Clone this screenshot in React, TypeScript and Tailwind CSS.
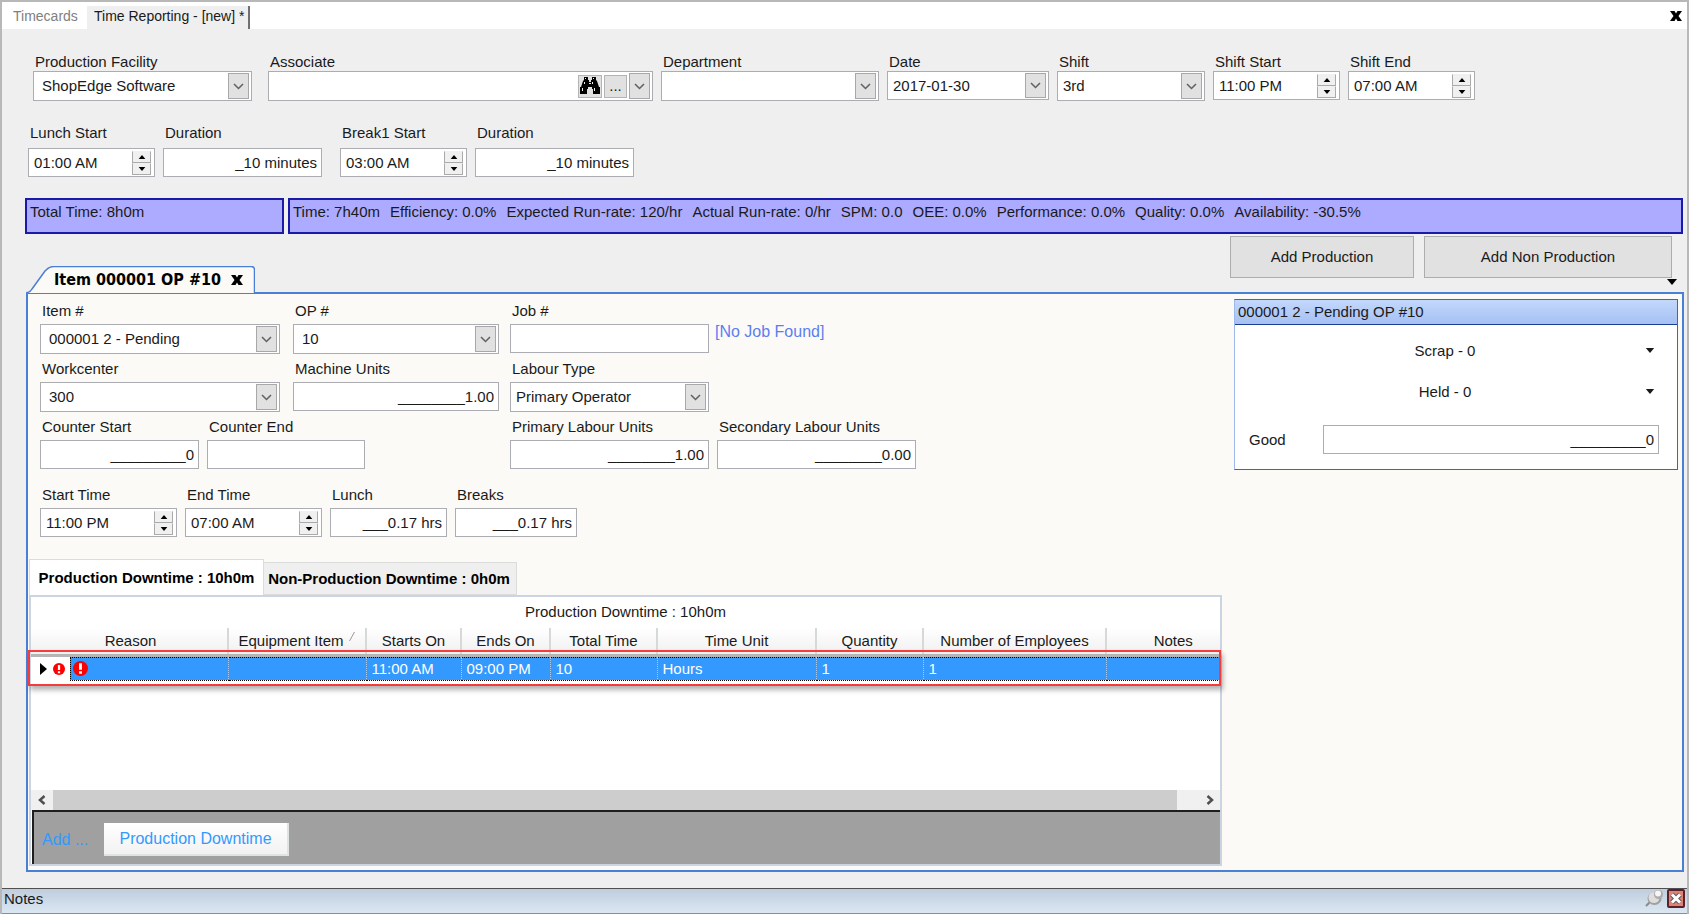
import { useId, type ReactNode } from 'react';

const BOX = 'border border-[#abadb3] bg-white';

function Chevron() {
  return (
    <svg width="11" height="7" viewBox="0 0 11 7" fill="none" stroke="#606060" strokeWidth="1.5">
      <path d="M1 1l4.5 4.5L10 1" />
    </svg>
  );
}

function Caret({ up = false, className = 'h-[6px] w-[10px]' }: { up?: boolean; className?: string }) {
  return (
    <svg viewBox="0 0 10 6" className={className}>
      <path d={up ? 'M0 6h10L5 0z' : 'M0 0h10L5 6z'} fill="currentColor" />
    </svg>
  );
}

function Field({
  label,
  id,
  className,
  gap = 'gap-0',
  children,
}: {
  label: string;
  id: string;
  className: string;
  gap?: string;
  children: ReactNode;
}) {
  return (
    <div className={`flex flex-col shrink-0 ${gap} ${className}`}>
      <label htmlFor={id} className="pl-[2px] leading-[18px] whitespace-nowrap">
        {label}
      </label>
      {children}
    </div>
  );
}

type FieldProps = { label: string; value?: string; className: string; gap?: string };

function Combo({ label, value = '', className, gap, pad = 'pl-2' }: FieldProps & { pad?: string }) {
  const id = useId();
  return (
    <Field label={label} id={id} className={className} gap={gap}>
      <div className="relative">
        <select id={id} className={`${BOX} h-[30px] w-full appearance-none pr-7 ${pad}`}>
          <option>{value}</option>
        </select>
        <span className="pointer-events-none absolute top-[2px] right-[3px] flex h-[26px] w-[21px] items-center justify-center border border-[#a8a8a8] bg-[#e1e1e1]">
          <Chevron />
        </span>
      </div>
    </Field>
  );
}

function Spinner({ label, value, className, gap }: FieldProps) {
  const id = useId();
  return (
    <Field label={label} id={id} className={className} gap={gap}>
      <div className={`${BOX} flex h-[29px] items-center pr-[3px]`}>
        <input id={id} defaultValue={value} className="min-w-0 flex-1 pl-[5px] outline-none" />
        <div className="flex flex-col text-black">
          {[true, false].map((up) => (
            <button
              key={String(up)}
              aria-label={`${label} ${up ? 'up' : 'down'}`}
              className="flex h-3 w-[19px] items-center justify-center border border-[#aaa] border-t-[#f0f0f0] bg-[#f0f0f0]"
            >
              <Caret up={up} className="h-1 w-2" />
            </button>
          ))}
        </div>
      </div>
    </Field>
  );
}

function NumberBox({ label, value, className, gap }: FieldProps) {
  const id = useId();
  return (
    <Field label={label} id={id} className={className} gap={gap}>
      <input id={id} defaultValue={value} className={`${BOX} h-[29px] w-full pr-1 text-right`} />
    </Field>
  );
}

function Binoculars() {
  return (
    <svg width="20" height="18" viewBox="0 0 20 18">
      <path
        d="M4 0h4v3h1v2h2V3h1V0h4v3l1 1 2 6h1v7h-7v-5h-1v-2H8v2H7v5H0v-7h1l2-6 1-1z"
        fill="#000"
      />
      <path
        d="M5 1h1v1H5zM13 1h1v1h-1zM4 5h1v2H4zM12 5h1v2h-1zM2 11h1v3H2zM14 11h1v3h-1zM9 6h2v1H9z"
        fill="#f0f0f0"
      />
    </svg>
  );
}

function ErrorIcon({ size }: { size: number }) {
  return (
    <svg width={size} height={size} viewBox="0 0 16 16" className="shrink-0">
      <circle cx="8" cy="8" r="8" fill="#f00" />
      <path d="M6.5 2.5h3v6.8h-3zM6.5 11h3v2.5h-3z" fill="#fff" />
    </svg>
  );
}

function CloseX() {
  return (
    <svg width="12" height="10" viewBox="0 0 12 10">
      <path d="M0 0h4.5L6 2.5 7.5 0H12L8.500 5 12 10H7.500L6 7.500 4.500 10H0l3.500-5z" fill="#000" />
    </svg>
  );
}

const STATS = [
  'Time: 7h40m',
  'Efficiency: 0.0%',
  'Expected Run-rate: 120/hr',
  'Actual Run-rate: 0/hr',
  'SPM: 0.0',
  'OEE: 0.0%',
  'Performance: 0.0%',
  'Quality: 0.0%',
  'Availability: -30.5%',
];

const COLUMNS = [
  { name: 'Equipment Item', value: '', width: 'w-[138px]', pad: 'pr-3' },
  { name: 'Starts On', value: '11:00 AM', width: 'w-[95px]', pad: '' },
  { name: 'Ends On', value: '09:00 PM', width: 'w-[89px]', pad: '' },
  { name: 'Total Time', value: '10', width: 'w-[107px]', pad: '' },
  { name: 'Time Unit', value: 'Hours', width: 'w-[159px]', pad: '' },
  { name: 'Quantity', value: '1', width: 'w-[107px]', pad: '' },
  { name: 'Number of Employees', value: '1', width: 'w-[183px]', pad: '' },
  { name: 'Notes', value: '', width: '', pad: 'pl-5' },
];

function DocumentTabs() {
  return (
    <div className="flex h-[27px] items-stretch bg-white pr-[5px] text-sm">
      <button className="w-[85px] pl-[11px] text-left text-[#808080]">Timecards</button>
      <button className="mt-1 w-[163px] border-r-2 border-[#707070] bg-[#efefef] pb-1 pl-[7px] text-left whitespace-nowrap">
        Time Reporting - [new] *
      </button>
      <button aria-label="Close" className="ml-auto">
        <CloseX />
      </button>
    </div>
  );
}

function ShiftForm() {
  const associateId = useId();
  const dateId = useId();
  return (
    <>
      <div className="flex items-start gap-2 pt-6 pl-[31px]">
        <Combo label="Production Facility" value="ShopEdge Software" className="mr-2 w-[219px]" />
        <Field label="Associate" id={associateId} className="w-[385px]">
          <div className={`${BOX} flex h-[30px] items-center gap-[2px] pr-[2px]`}>
            <input id={associateId} className="min-w-0 flex-1 pl-2 outline-none" />
            <button
              aria-label="Find associate"
              className="flex h-[23px] w-6 items-center justify-center border border-[#b4b4b4] bg-[#e1e1e1]"
            >
              <Binoculars />
            </button>
            <button className="h-[23px] w-[23px] border border-[#b4b4b4] bg-[#e1e1e1]">...</button>
            <button
              aria-label="Associate list"
              className="flex h-[26px] w-[21px] items-center justify-center border border-[#a8a8a8] bg-[#e1e1e1]"
            >
              <Chevron />
            </button>
          </div>
        </Field>
        <Combo label="Department" className="w-[218px]" />
        <Field label="Date" id={dateId} className="w-[162px]">
          <div className={`${BOX} flex h-[29px] items-center pr-[2px]`}>
            <input id={dateId} defaultValue="2017-01-30" className="min-w-0 flex-1 pl-[5px] outline-none" />
            <button
              aria-label="Open calendar"
              className="flex h-[25px] w-[21px] items-center justify-center border border-[#a8a8a8] bg-[#e1e1e1]"
            >
              <Chevron />
            </button>
          </div>
        </Field>
        <Combo label="Shift" value="3rd" pad="pl-[5px]" className="w-[148px]" />
        <Spinner label="Shift Start" value="11:00 PM" className="w-[127px]" />
        <Spinner label="Shift End" value="07:00 AM" className="w-[127px]" />
      </div>
      <div className="flex items-start gap-2 pt-[23px] pl-[26px]">
        <Spinner label="Lunch Start" value="01:00 AM" gap="gap-[6px]" className="w-[127px]" />
        <NumberBox label="Duration" value="_10 minutes" gap="gap-[6px]" className="mr-[10px] w-[159px]" />
        <Spinner label="Break1 Start" value="03:00 AM" gap="gap-[6px]" className="w-[127px]" />
        <NumberBox label="Duration" value="_10 minutes" gap="gap-[6px]" className="w-[159px]" />
      </div>
    </>
  );
}

function ItemForm() {
  return (
    <div className="flex flex-col pt-2 pl-3">
      <div className="flex">
        <div className="flex w-[253px] flex-col gap-[6px]">
          <Combo label="Item #" value="000001 2 - Pending" gap="gap-1" className="w-[240px]" />
          <Combo label="Workcenter" value="300" gap="gap-1" className="w-[240px]" />
          <div className="flex gap-2">
            <NumberBox label="Counter Start" value="_________0" gap="gap-1" className="w-[159px]" />
            <NumberBox label="Counter End" gap="gap-1" className="w-[158px]" />
          </div>
        </div>
        <div className="flex w-[217px] flex-col gap-[6px]">
          <Combo label="OP #" value="10" gap="gap-1" className="w-[206px]" />
          <NumberBox label="Machine Units" value="________1.00" gap="gap-1" className="w-[206px]" />
        </div>
        <div className="flex flex-col gap-[6px]">
          <div className="flex gap-[6px]">
            <NumberBox label="Job #" gap="gap-1" className="w-[199px]" />
            <a href="#job" className="h-[52px] pt-5 text-base leading-5 text-[#5b7ff0]">
              [No Job Found]
            </a>
          </div>
          <Combo
            label="Labour Type"
            value="Primary Operator"
            pad="pl-[5px]"
            gap="gap-1"
            className="w-[199px]"
          />
          <div className="flex gap-2">
            <NumberBox label="Primary Labour Units" value="________1.00" gap="gap-1" className="w-[199px]" />
            <NumberBox label="Secondary Labour Units" value="________0.00" gap="gap-1" className="w-[199px]" />
          </div>
        </div>
      </div>
      <div className="flex gap-2 pt-[17px]">
        <Spinner label="Start Time" value="11:00 PM" gap="gap-1" className="w-[137px]" />
        <Spinner label="End Time" value="07:00 AM" gap="gap-1" className="w-[137px]" />
        <NumberBox label="Lunch" value="___0.17 hrs" gap="gap-1" className="w-[117px]" />
        <NumberBox label="Breaks" value="___0.17 hrs" gap="gap-1" className="w-[122px]" />
      </div>
    </div>
  );
}

function DowntimeTable() {
  return (
    <table className="w-full table-fixed border-collapse">
      <caption className="h-[31px] text-center leading-[29px]">Production Downtime : 10h0m</caption>
      <thead>
        <tr className="h-[26px] bg-linear-to-b from-white to-[#f0f0f0]">
          <th className="w-[39px]" />
          <th className="w-[158px] border-r-2 border-[#d5d9d9] pr-9 font-normal">Reason</th>
          {COLUMNS.map((c) => (
            <th
              key={c.name}
              className={`relative border-r-2 border-[#d5d9d9] font-normal whitespace-nowrap last:border-r-0 ${c.width} ${c.pad}`}
            >
              {c.name}
              {c.name === 'Equipment Item' && (
                <svg width="6" height="9" viewBox="0 0 6 9" className="absolute top-1 right-[10px]">
                  <path d="M0.5 9L5.5 0" stroke="#999" />
                </svg>
              )}
            </th>
          ))}
        </tr>
      </thead>
      <tbody>
        <tr className="h-[3px] bg-[#b5b5b5]">
          <td colSpan={10} />
        </tr>
        <tr className="h-[23px] text-white">
          <td>
            <div className="flex items-center gap-[6px] pl-[9px]">
              <svg width="7" height="12" viewBox="0 0 7 12">
                <path d="M0 0l7 6-7 6z" fill="#000" />
              </svg>
              <ErrorIcon size={12} />
            </div>
          </td>
          <td className="border-y border-l border-r border-dotted border-y-black border-r-[#a8c8ec] border-l-black bg-[#3399ff] pl-[2px]">
            <ErrorIcon size={15} />
          </td>
          {COLUMNS.map((c) => (
            <td
              key={c.name}
              className="border-y border-r border-dotted border-y-black border-r-[#a8c8ec] bg-[#3399ff] pl-[5px] leading-5"
            >
              {c.value}
            </td>
          ))}
        </tr>
      </tbody>
    </table>
  );
}

function Downtime() {
  return (
    <div className="flex flex-1 flex-col pt-[22px] pl-px">
      <div className="flex items-end font-bold text-black">
        <button className="h-9 w-[235px] border border-b-0 border-[#dcdcdc] bg-white whitespace-nowrap">
          Production Downtime : 10h0m
        </button>
        <button className="h-[33px] w-[253px] border border-l-0 border-[#dcdcdc] bg-[#efefef] pr-[2px] whitespace-nowrap">
          Non-Production Downtime : 0h0m
        </button>
      </div>
      <div className="relative mb-1 flex flex-1 flex-col border-2 border-[#ccd3e2] bg-white">
        <DowntimeTable />
        {/* validation outline around the invalid row */}
        <div className="pointer-events-none absolute top-[53px] right-[-1px] left-[-3px] h-9 border-2 border-[#f63b3b] shadow-[2px_4px_5px_rgba(0,0,0,0.3)]" />
        <div className="mt-auto flex h-5 items-stretch bg-[#f0f0f0]">
          <button aria-label="Scroll left" className="flex w-[22px] items-center justify-center">
            <svg width="8" height="10" viewBox="0 0 8 10" fill="none" stroke="#505050" strokeWidth="2.5">
              <path d="M6.5 1L2 5l4.5 4" />
            </svg>
          </button>
          <div className="flex-1 bg-[#cdcdcd]" />
          <button aria-label="Scroll right" className="flex w-[43px] items-center justify-end pr-[6px]">
            <svg width="8" height="10" viewBox="0 0 8 10" fill="none" stroke="#505050" strokeWidth="2.5">
              <path d="M1.5 1L6 5 1.5 9" />
            </svg>
          </button>
        </div>
        <div className="ml-px flex h-[54px] items-center border-t-2 border-l-2 border-[#1e1e1e] bg-[#a0a0a0] pt-[2px] pl-2 text-base text-[#3399ff]">
          <span className="w-[62px] pt-[2px]">Add ...</span>
          <button className="h-[33px] w-[185px] border-r-2 border-b-2 border-[#dfe3e3] bg-linear-to-b from-white to-[#f2f2f2] pt-[2px]">
            Production Downtime
          </button>
        </div>
      </div>
    </div>
  );
}

function QuantityPanel() {
  const goodId = useId();
  return (
    <section className="mt-[5px] mr-1 ml-auto flex h-[171px] w-[444px] flex-col border border-[#3a66c0] border-l-[#9db9ec] bg-white">
      <h2 className="flex h-[25px] shrink-0 items-center border-b border-[#1c3f94] bg-linear-to-b from-[#c3d8fb] to-[#a5c0f3] pl-[3px]">
        000001 2 - Pending OP #10
      </h2>
      {['Scrap - 0', 'Held - 0'].map((text) => (
        <button key={text} className="flex h-[41px] shrink-0 items-center pt-[10px]">
          <span className="flex-1 pl-[10px]">{text}</span>
          <Caret className="mr-[22px] h-[5px] w-[10px]" />
        </button>
      ))}
      <div className="mt-[18px] flex items-center pr-[18px] pl-[14px]">
        <label htmlFor={goodId} className="w-[74px]">
          Good
        </label>
        <input id={goodId} defaultValue="_________0" className={`${BOX} h-[29px] min-w-0 flex-1 pr-1 text-right`} />
      </div>
    </section>
  );
}

function NotesBar() {
  return (
    <footer className="flex h-[26px] items-start justify-between border-t border-b border-t-[#505050] border-b-[#8a8f96] bg-linear-to-b from-[#bfcddd] to-[#dbe7f3]">
      <span className="pl-[2px] leading-5">Notes</span>
      <div className="flex gap-[3px] pr-[2px]">
        <button aria-label="Pin">
          <svg width="19" height="19" viewBox="0 0 19 19">
            <path d="M1 17l4-4" stroke="#8a8a8a" strokeWidth="2" />
            <ellipse cx="9.5" cy="9.5" rx="7" ry="6.5" fill="#a0a0a0" />
            <ellipse cx="9" cy="8.5" rx="5.5" ry="5.5" fill="#dedede" />
            <circle cx="13.5" cy="5.5" r="4.5" fill="#acacac" />
            <circle cx="13" cy="4.5" r="3" fill="#f6f6f6" />
          </svg>
        </button>
        <button aria-label="Close notes">
          <svg width="18" height="19" viewBox="0 0 18 19">
            <rect x="1" y="1" width="16" height="17" rx="1" fill="#dd8474" stroke="#5c1f2b" strokeWidth="2" />
            <path d="M5 5.5l8 8M13 5.5l-8 8" stroke="#5a5a66" strokeWidth="5" />
            <path d="M5 5.5l8 8M13 5.5l-8 8" stroke="#fff" strokeWidth="3" />
          </svg>
        </button>
      </div>
    </footer>
  );
}

export default function App() {
  return (
    <div className="flex min-h-screen flex-col border-t-2 border-r-2 border-l-2 border-[#b8b8b8] bg-[#efefef] font-['Liberation_Sans',Arial,sans-serif] text-[15px] leading-[18px] text-[#1a1a1a]">
      <DocumentTabs />
      <ShiftForm />

      <div className="mt-[21px] mr-1 ml-[23px] flex gap-1">
        <div className="h-[36px] w-[259px] border-2 border-[#1a1aa8] bg-[#adabff] pt-[3px] pl-[3px]">
          Total Time: 8h0m
        </div>
        <div className="flex h-[36px] flex-1 gap-[10px] border-2 border-[#1a1aa8] bg-[#adabff] pt-[3px] pl-[3px] whitespace-nowrap">
          {STATS.map((s) => (
            <span key={s}>{s}</span>
          ))}
        </div>
      </div>

      <div className="flex h-[58px] items-end justify-between pr-[10px] pl-6">
        <div className="relative z-10 -mb-px h-[27px] w-[229px]">
          <svg viewBox="0 0 229 27" className="absolute inset-0 h-full w-full">
            <path
              d="M0.5 27v-0.5Q4 26.5 6 23L19 5Q23 0.5 28 0.5H225Q228.5 0.5 228.5 4V27z"
              fill="#fbfaf7"
            />
            <path
              d="M0.5 26.5Q4 26.5 6 23L19 5Q23 0.5 28 0.5H225Q228.5 0.5 228.5 4V27"
              fill="none"
              stroke="#4a7fd8"
              strokeWidth="1.5"
            />
          </svg>
          <div className="relative flex h-full items-center pl-7 font-['DejaVu_Sans_Condensed','DejaVu_Sans',sans-serif] text-base font-bold whitespace-nowrap text-black">
            <span className="w-[177px]">Item 000001 OP #10</span>
            <button aria-label="Close tab">
              <CloseX />
            </button>
          </div>
        </div>
        <div className="flex h-full flex-col items-end">
          <div className="flex gap-[10px] pt-[2px] pr-[5px]">
            <button className="h-[42px] w-[184px] border border-[#adadad] bg-[#e1e1e1]">Add Production</button>
            <button className="h-[42px] w-[248px] border border-[#adadad] bg-[#e1e1e1]">Add Non Production</button>
          </div>
          <button aria-label="Tab list" className="mt-px flex text-black">
            <Caret />
          </button>
        </div>
      </div>

      <main className="mr-[3px] mb-4 ml-6 flex flex-1 border-2 border-[#4a7fd8] bg-[#fbfaf7]">
        <div className="flex w-[1194px] shrink-0 flex-col">
          <ItemForm />
          <Downtime />
        </div>
        <QuantityPanel />
      </main>

      <NotesBar />
    </div>
  );
}
